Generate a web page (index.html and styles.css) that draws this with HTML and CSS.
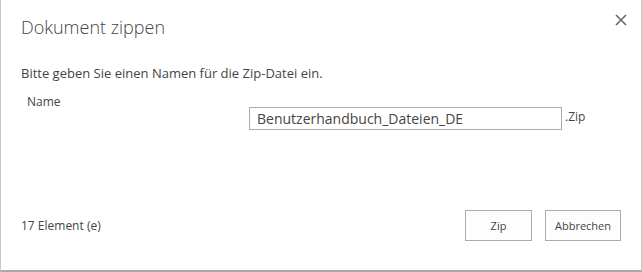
FILE: index.html
```html
<!DOCTYPE html>
<html lang="de">
  <head>
    <meta charset="UTF-8" />
    <meta name="viewport" content="width=device-width, initial-scale=1.0" />
    <title>Dokument zippen</title>
    <link rel="stylesheet" href="styles.css">
  </head>
  <body>
    <div class="dialog">
      <div class="dlg_head">
        <h1 class="dlg_title">Dokument zippen</h1>
        <a href="#" class="dlg_close" title="Schließen">
          <svg width="12" height="12" viewBox="0 0 12 12">
            <path d="M1 1 L11 11 M11 1 L1 11" stroke="#6a6a6a" stroke-width="1.6" fill="none" />
          </svg>
        </a>
      </div>
      <p class="dlg_text">Bitte geben Sie einen Namen für die Zip-Datei ein.</p>
      <div class="field_label">Name</div>
      <div class="field_row">
        <input type="text" class="field_input" value="Benutzerhandbuch_Dateien_DE" />
        <span class="field_ext">.Zip</span>
      </div>
      <div class="dlg_foot">
        <span class="count">17 Element (e)</span>
        <div class="buttons">
          <button class="btn btn_zip">Zip</button>
          <button class="btn btn_cancel">Abbrechen</button>
        </div>
      </div>
    </div>
  </body>
</html>
```

FILE: styles.css
```css
* {
  padding: 0;
  margin: 0;
  box-sizing: border-box;
}
body {
  background-color: #fff;
  font-family: "Open Sans", "Liberation Sans", sans-serif;
  color: #444;
}
.dialog {
  width: 642px;
  height: 272px;
  border-left: 1px solid #c8c8c8;
  border-right: 1px solid #c8c8c8;
  border-bottom: 2px solid #a8a8a8;
  padding: 0 20px 0 20px;
  display: flex;
  flex-direction: column;
}
.dlg_head {
  display: flex;
  justify-content: space-between;
  align-items: flex-start;
  padding-top: 14px;
}
.dlg_title {
  font-weight: 300;
  font-size: 18px;
  line-height: 26px;
  color: #444;
}
.dlg_close {
  display: block;
  margin-top: 0;
  margin-right: -6px;
  width: 12px;
  height: 12px;
}
.dlg_close svg {
  display: block;
}
.dlg_text {
  font-size: 13px;
  line-height: 16px;
  margin-top: 25px;
}
.field_label {
  font-size: 12px;
  line-height: 16px;
  margin-top: 13px;
  padding-left: 6px;
}
.field_row {
  display: flex;
  align-items: center;
  padding-left: 228px;
  margin-top: -3px;
}
.field_input {
  width: 313px;
  height: 23px;
  border: 1px solid #ababab;
  padding: 0 7px;
  font-family: inherit;
  font-size: 14px;
  color: #444;
  outline: none;
}
.field_ext {
  font-size: 12px;
  margin-left: 3px;
  margin-top: -4px;
}
.dlg_foot {
  margin-top: auto;
  display: flex;
  justify-content: space-between;
  align-items: center;
  padding-bottom: 29px;
}
.count {
  font-size: 12px;
}
.buttons {
  display: flex;
  gap: 13px;
}
.btn {
  height: 31px;
  border: 1px solid #ababab;
  background: #fdfdfd;
  font-family: inherit;
  font-size: 11px;
  color: #444;
}
.btn_zip {
  width: 67px;
}
.btn_cancel {
  width: 76px;
}
```
